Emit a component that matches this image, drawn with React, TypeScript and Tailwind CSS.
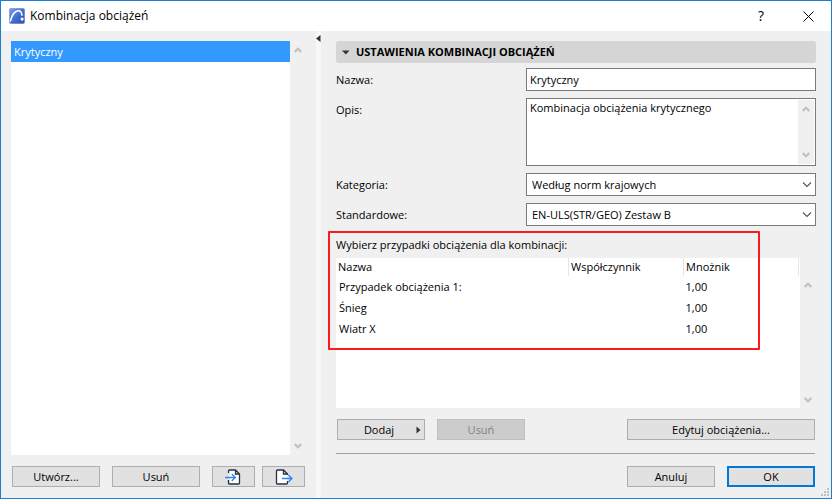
import React, { useState } from 'react';

const loadCases = [
  { name: 'Przypadek obciążenia 1:', factor: '', multiplier: '1,00' },
  { name: 'Śnieg', factor: '', multiplier: '1,00' },
  { name: 'Wiatr X', factor: '', multiplier: '1,00' },
];

const buttonStyle = 'h-[21px] border border-[#adadad] bg-[#e1e1e1] text-center leading-[19px]';
const fieldStyle = 'w-full border border-[#7a7a7a] bg-white outline-none';

function ScrollBar({ className = '' }: { className?: string }) {
  return (
    <div aria-hidden="true" className={`flex w-4 shrink-0 flex-col items-center justify-between bg-[#f0f0f0] ${className}`}>
      <svg width="8" height="6" viewBox="0 0 8 6" fill="none" stroke="#bfbfbf" strokeWidth="2">
        <path d="M.7 5 4 1.7 7.3 5" />
      </svg>
      <svg width="8" height="6" viewBox="0 0 8 6" fill="none" stroke="#bfbfbf" strokeWidth="2">
        <path d="M.7 1 4 4.3 7.3 1" />
      </svg>
    </div>
  );
}

function AppIcon() {
  return (
    <svg width="16" height="16" viewBox="0 0 16 16">
      <defs>
        <linearGradient id="appIcon" x1="0" y1="0" x2="1" y2="1">
          <stop offset="0" stopColor="#7fa0e6" />
          <stop offset=".5" stopColor="#4470d0" />
          <stop offset="1" stopColor="#2a4fae" />
        </linearGradient>
      </defs>
      <rect x=".3" y=".3" width="15.400" height="15.400" rx="2" fill="url(#appIcon)" stroke="#7d93c4" strokeWidth=".6" />
      <path d="M1.200 13.500C2.500 8.500 5.500 3 9.500 2.800c2.300-.1 3.200 1.700 3.500 5" fill="none" stroke="#fff" strokeWidth="1.600" />
      <rect x="11.800" y="9.800" width="2.600" height="2.600" rx=".5" fill="#fff" />
    </svg>
  );
}

function ImportIcon() {
  return (
    <svg width="17" height="16" viewBox="0 0 17 16" fill="none">
      <path d="M4.500 1h6l4 4v9a1 1 0 0 1-1 1h-8a1 1 0 0 1-1-1V1Z" fill="#fff" />
      <path d="M3.500 4V2a1 1 0 0 1 1-1h6l4 4v9a1 1 0 0 1-1 1h-9a1 1 0 0 1-1-1v-3M10.500 1v4h4" stroke="#26323c" strokeWidth="1.300" />
      <path d="M0 8.500h10M6.800 5 10.300 8.500l-3.500 3.500" stroke="#2f86f6" strokeWidth="1.300" />
    </svg>
  );
}

function ExportIcon() {
  return (
    <svg width="18" height="16" viewBox="0 0 18 16" fill="none">
      <path d="M12.500 6V5l-4-4h-6a1 1 0 0 0-1 1v12a1 1 0 0 0 1 1h9a1 1 0 0 0 1-1v-2" fill="#fff" stroke="#26323c" strokeWidth="1.300" />
      <path d="M8.500 1v4h4" stroke="#26323c" strokeWidth="1.300" />
      <path d="M7 9.500h10M13.500 6 17 9.500l-3.500 3.500" stroke="#2f86f6" strokeWidth="1.300" />
    </svg>
  );
}

function SelectField({ id, label, options }: { id: string; label: string; options: string[] }) {
  return (
    <div className="mt-[7px] flex items-center">
      <label htmlFor={id} className="w-[190px] shrink-0">{label}</label>
      <div className="relative flex-1">
        <select id={id} className={`${fieldStyle} block h-[23px] appearance-none pl-[5px]`}>
          {options.map((option) => (
            <option key={option}>{option}</option>
          ))}
        </select>
        <svg className="pointer-events-none absolute top-2 right-1" width="10" height="7" viewBox="0 0 10 7" fill="none" stroke="#555" strokeWidth="1.100">
          <path d="M1 1.500 5 5.500 9 1.500" />
        </svg>
      </div>
    </div>
  );
}

export default function App() {
  const [name, setName] = useState('Krytyczny');
  const [description, setDescription] = useState('Kombinacja obciążenia krytycznego');

  return (
    <div className="flex min-h-screen flex-col border border-[#1a7fd4] bg-[#f0f0f0] font-['Open_Sans',sans-serif] text-[11px] leading-4 text-black">
      <header className="flex h-[30px] shrink-0 items-center bg-white pl-2">
        <AppIcon />
        <h1 className="ml-[5px] flex-1 text-[12px]">Kombinacja obciążeń</h1>
        <button aria-label="Pomoc" className="w-12 text-[14px]">?</button>
        <button aria-label="Zamknij" className="flex h-full w-[46px] items-center justify-center">
          <svg width="11" height="11" viewBox="0 0 11 11" stroke="#000" strokeWidth="1">
            <path d="M.5.500l10 10M10.500.500l-10 10" />
          </svg>
        </button>
      </header>

      <div className="flex flex-1">
        <aside className="flex w-[315px] shrink-0 flex-col pt-[10px] pb-[11px] pl-[10px]">
          <div className="flex flex-1">
            <ul role="listbox" aria-label="Kombinacje" className="w-[279px] bg-white">
              <li role="option" aria-selected="true" className="h-[21px] bg-[#3399ff] pl-[3px] leading-[21px] text-white">Krytyczny</li>
            </ul>
            <ScrollBar className="py-[6px]" />
          </div>
          <div className="mt-[11px] flex pl-px">
            <button className={`${buttonStyle} w-[88px]`}>Utwórz...</button>
            <button className={`${buttonStyle} ml-3 w-[88px]`}>Usuń</button>
            <button aria-label="Importuj" className={`${buttonStyle} ml-3 flex w-[43px] items-center justify-center`}>
              <ImportIcon />
            </button>
            <button aria-label="Eksportuj" className={`${buttonStyle} ml-[7px] flex w-[43px] items-center justify-center`}>
              <ExportIcon />
            </button>
          </div>
        </aside>

        <div className="w-[5px] shrink-0 bg-[#f7f7f7] pt-1">
          <svg width="5" height="7" viewBox="0 0 5 7">
            <path d="M4.500 0v7L0 3.500Z" fill="#333" />
          </svg>
        </div>

        <main className="flex flex-1 flex-col pt-[10px] pr-[15px] pb-[11px] pl-[15px]">
          <h2 className="flex h-[22px] items-center rounded-[3px] bg-[#d5d5d5] pl-[6px] font-bold">
            <svg width="8" height="5" viewBox="0 0 8 5">
              <path d="M0 .5h7.500L3.750 4.500Z" fill="#333" />
            </svg>
            <span className="ml-[6px]">USTAWIENIA KOMBINACJI OBCIĄŻEŃ</span>
          </h2>

          <div className="mt-[5px] flex items-center">
            <label htmlFor="name" className="w-[190px] shrink-0">Nazwa:</label>
            <input id="name" value={name} onChange={(e) => setName(e.target.value)} className={`${fieldStyle} h-[23px] px-[3px]`} />
          </div>

          <div className="mt-[7px] flex">
            <label htmlFor="description" className="w-[190px] shrink-0 pt-1">Opis:</label>
            <div className="relative flex-1">
              <textarea
                id="description"
                value={description}
                onChange={(e) => setDescription(e.target.value)}
                className={`${fieldStyle} block h-[68px] resize-none overflow-hidden py-px pr-5 pl-[3px]`}
              />
              <ScrollBar className="absolute top-[2px] right-[2px] bottom-[2px] py-[6px]" />
            </div>
          </div>

          <SelectField id="category" label="Kategoria:" options={['Według norm krajowych']} />
          <SelectField id="standard" label="Standardowe:" options={['EN-ULS(STR/GEO) Zestaw B']} />

          <section className="relative mt-[11px] flex flex-1 flex-col">
            <h3 id="casesLabel">Wybierz przypadki obciążenia dla kombinacji:</h3>
            <div className="mt-[5px] flex flex-1">
              <div className="flex-1 bg-white pr-px">
                <table aria-labelledby="casesLabel" className="w-full table-fixed border-collapse text-left">
                  <thead>
                    <tr className="h-[18px]">
                      <th className="border-r border-[#e5e5e5] p-0 pl-[2px] font-normal">Nazwa</th>
                      <th className="w-[115px] border-r border-[#e5e5e5] p-0 pl-[2px] font-normal">Współczynnik</th>
                      <th className="w-[115px] border-r border-[#e5e5e5] p-0 pl-[2px] font-normal">Mnożnik</th>
                    </tr>
                  </thead>
                  <tbody>
                    {loadCases.map((item) => (
                      <tr key={item.name} className="h-[21px]">
                        <td className="p-0 pl-[3px]">{item.name}</td>
                        <td className="p-0 pl-[2px]">{item.factor}</td>
                        <td className="p-0 pl-[2px]">{item.multiplier}</td>
                      </tr>
                    ))}
                  </tbody>
                </table>
              </div>
              <ScrollBar className="pt-6 pb-[5px]" />
            </div>
            <div className="pointer-events-none absolute -top-[6px] right-14 -left-2 h-[119px] rounded-[1px] border-2 border-[#fb1a1a]" />
          </section>

          <div className="mt-[11px] flex pr-px pl-px">
            <button className={`${buttonStyle} relative w-[88px] pr-1 pb-[2px]`}>
              Dodaj
              <svg className="absolute top-[6px] right-[3px]" width="5" height="8" viewBox="0 0 5 8">
                <path d="M.5.500v7L4.500 4Z" fill="#333" />
              </svg>
            </button>
            <button disabled className="ml-3 h-[21px] w-[88px] border border-[#bfbfbf] bg-[#cccccc] text-center leading-[19px] text-[#838383]">Usuń</button>
            <button className={`${buttonStyle} ml-auto w-[188px]`}>Edytuj obciążenia...</button>
          </div>

          <hr className="mt-[13px] mr-px border-[#a0a0a0]" />

          <div className="mt-3 flex justify-end gap-3 pr-px">
            <button className={`${buttonStyle} w-[88px]`}>Anuluj</button>
            <button className="h-[21px] w-[88px] border-2 border-[#0078d7] bg-[#e1e1e1] text-center leading-[17px]">OK</button>
          </div>
        </main>
      </div>

      <svg className="absolute right-[3px] bottom-[3px]" width="8" height="8" viewBox="0 0 8 8" fill="#bfbfbf">
        <path d="M6 0h2v2H6zM3 3h2v2H3zM6 3h2v2H6zM0 6h2v2H0zM3 6h2v2H3zM6 6h2v2H6z" />
      </svg>
    </div>
  );
}
